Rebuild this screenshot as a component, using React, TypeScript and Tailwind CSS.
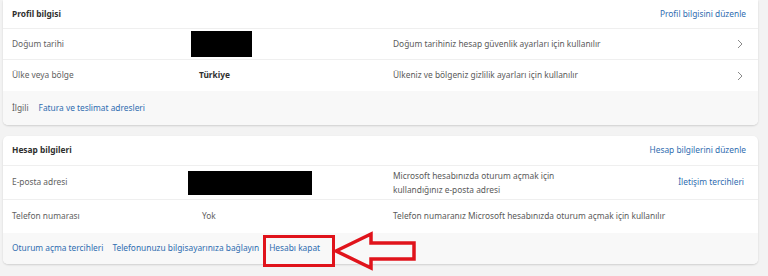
import React from "react";

const font = { fontFamily: '"Noto Sans", "Open Sans", sans-serif' };

function Chevron() {
  return (
    <svg width="8" height="10" viewBox="0 0 8 10" className="text-[#8a8a8a]">
      <path d="M2 1 L6 5 L2 9" fill="none" stroke="currentColor" strokeWidth="1" />
    </svg>
  );
}

export default function App() {
  return (
    <div className="relative w-[768px] h-[276px] overflow-hidden bg-[#f3f3f3] text-[8.35px]" style={font}>
      <div className="flex flex-col gap-[11px] pl-[3px] pr-[10px]">
        {/* Card 1 */}
        <div className="bg-white rounded-b-[5px] shadow-[0_1px_2px_rgba(0,0,0,0.15)] overflow-hidden">
          <div className="h-[29px] flex items-center justify-between pl-[9px] pr-[12px] border-b border-[#efefef]">
            <span className="font-bold text-[#2f2f2f]">Profil bilgisi</span>
            <span className="text-[#2f6db0]">Profil bilgisini düzenle</span>
          </div>
          <div className="h-[31px] flex items-center pl-[9px] pr-[14px] border-b border-[#efefef]">
            <span className="w-[179px] text-[#616161]">Doğum tarihi</span>
            <span className="w-[202px] flex items-center">
              <span className="block w-[61px] h-[26px] bg-black"></span>
            </span>
            <span className="flex-1 text-[#5a5a5a]">Doğum tarihiniz hesap güvenlik ayarları için kullanılır</span>
            <Chevron />
          </div>
          <div className="h-[31px] flex items-center pl-[9px] pr-[14px]">
            <span className="w-[179px] text-[#616161]">Ülke veya bölge</span>
            <span className="w-[202px] pl-[8px] font-bold text-[#2f2f2f]">Türkiye</span>
            <span className="flex-1 text-[#5a5a5a]">Ülkeniz ve bölgeniz gizlilik ayarları için kullanılır</span>
            <Chevron />
          </div>
          <div className="h-[34px] flex items-center gap-[10px] px-[9px] bg-[#f8f8f8]">
            <span className="text-[#616161]">İlgili</span>
            <span className="text-[#2f6db0]">Fatura ve teslimat adresleri</span>
          </div>
        </div>

        {/* Card 2 */}
        <div className="bg-white rounded-[5px] shadow-[0_1px_2px_rgba(0,0,0,0.15)] overflow-hidden">
          <div className="h-[30px] flex items-center justify-between pl-[9px] pr-[12px] border-b border-[#efefef]">
            <span className="font-bold text-[#2f2f2f]">Hesap bilgileri</span>
            <span className="text-[#2f6db0]">Hesap bilgilerini düzenle</span>
          </div>
          <div className="h-[34px] flex items-center pl-[9px] pr-[14px] border-b border-[#efefef]">
            <span className="w-[176px] text-[#616161]">E-posta adresi</span>
            <span className="w-[205px] flex items-center">
              <span className="block w-[124px] h-[24px] bg-black"></span>
            </span>
            <span className="flex-1 text-[#5a5a5a] leading-[14px]">
              Microsoft hesabınızda oturum açmak için
              <br />
              kullandığınız e-posta adresi
            </span>
            <span className="text-[#2f6db0]">İletişim tercihleri</span>
          </div>
          <div className="h-[33px] flex items-center pl-[9px] pr-[14px]">
            <span className="w-[179px] text-[#616161]">Telefon numarası</span>
            <span className="w-[202px] pl-[11px] text-[#616161]">Yok</span>
            <span className="flex-1 text-[#5a5a5a]">Telefon numaranız Microsoft hesabınızda oturum açmak için kullanılır</span>
          </div>
          <div className="h-[31px] flex items-center gap-[9px] px-[9px] bg-[#f8f8f8]">
            <span className="text-[#2f6db0]">Oturum açma tercihleri</span>
            <span className="text-[#2f6db0]">Telefonunuzu bilgisayarınıza bağlayın</span>
            <span className="ml-[1px] text-[#2f6db0]">Hesabı kapat</span>
          </div>
        </div>
      </div>

      {/* Annotation overlay */}
      <div className="absolute left-[263px] top-[235px] w-[72px] h-[32px] border-[3px] border-[#e0131b]"></div>
      <svg className="absolute left-[330px] top-[228px]" width="95" height="46" viewBox="0 0 95 46">
        <path
          d="M6 23 L41 6 L41 15 L84 15 L84 31 L41 31 L41 40 Z"
          fill="none"
          stroke="#e0131b"
          strokeWidth="3.5"
          strokeLinejoin="miter"
        />
      </svg>
    </div>
  );
}
